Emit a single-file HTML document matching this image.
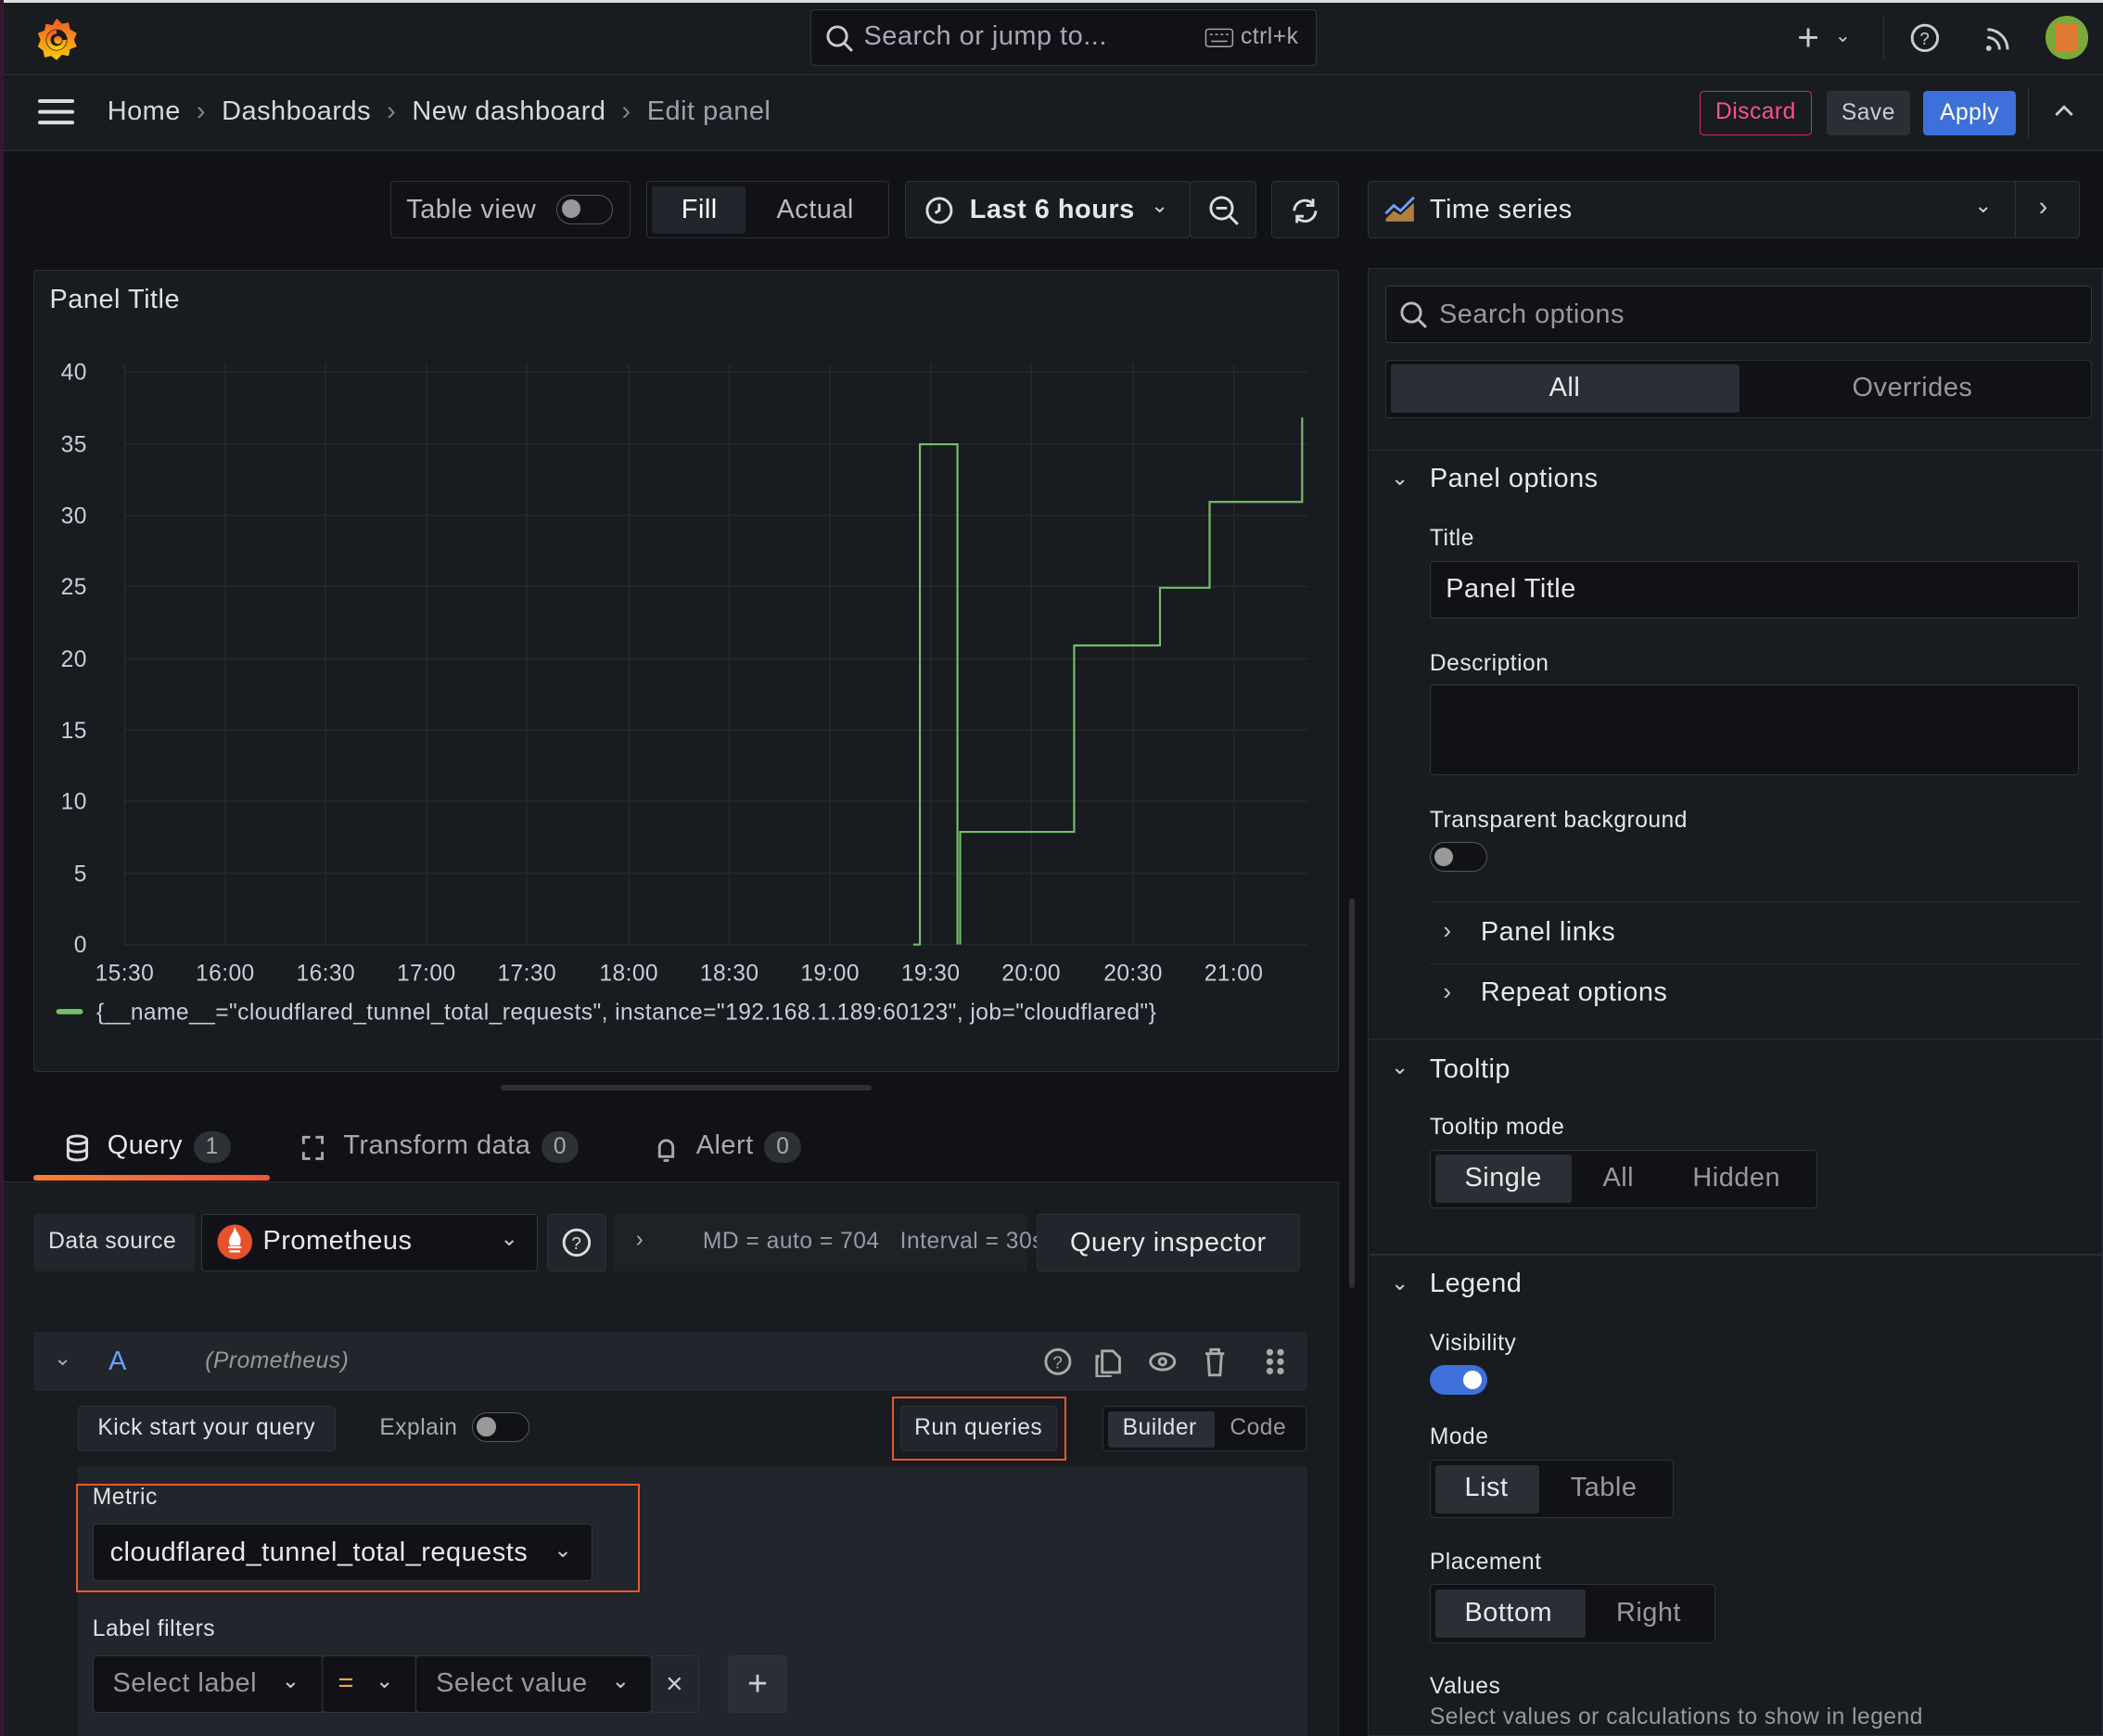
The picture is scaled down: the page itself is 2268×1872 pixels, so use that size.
<!DOCTYPE html>
<html><head><meta charset="utf-8">
<style>
*{box-sizing:border-box;margin:0;padding:0}
html,body{width:2268px;height:1872px;overflow:hidden;background:#111217}
#w{position:absolute;left:0;top:0;width:1568px;height:1294px;zoom:1.44643;background:#111217;font-family:"Liberation Sans",sans-serif;color:#ccccdc;overflow:hidden;letter-spacing:0.35px}
.a{position:absolute}
.box{position:absolute;border:1px solid #2f3137;border-radius:3px;background:#181b1f}
.t{position:absolute;white-space:nowrap}
.btn{position:absolute;background:#22252b;border:1px solid #2f3137;border-radius:3px;color:#ccccdc;display:flex;align-items:center;justify-content:center}
.lbl{position:absolute;font-size:17px;color:#e6e6ea}
.inp{position:absolute;background:#111217;border:1px solid #34363c;border-radius:3px}
.sep{position:absolute;height:1px;background:#2a2d33}
.badge{display:inline-block;background:#2d3036;border-radius:12px;padding:2px 9px;font-size:17px;margin-left:8px;color:#aaa}
</style></head><body><div id="w">
<div class="a" style="left:0;top:0;width:1568px;height:2px;background:#ddd"></div>
<div class="a" style="left:0;top:0;width:3px;height:1294px;background:#3a1530"></div>
<div class="a" style="left:3px;top:2px;width:1565px;height:110px;background:#181b1f"></div>
<div class="sep" style="left:3px;top:55px;width:1565px;background:#2c2e34"></div>
<div class="sep" style="left:3px;top:112px;width:1565px;background:#2c2e34"></div>
<svg class="a" style="left:24px;top:12px" width="36" height="36" viewBox="0 0 36 36"><defs><linearGradient id="g" x1="0" y1="1" x2="0" y2="0"><stop offset="0" stop-color="#fbca0a"/><stop offset="1" stop-color="#f05a28"/></linearGradient></defs><path d="M18 2l4 4 5-1 1 5 5 3-2 5 2 5-5 2-1 5-5-1-4 4-4-3-5 1-1-5-4-3 2-5-2-5 5-2 1-5 5 1z" fill="url(#g)"/><circle cx="18" cy="18" r="8" fill="#181b1f"/><path d="M18 12a6 6 0 1 0 6 6" stroke="url(#g)" stroke-width="3" fill="none"/><circle cx="19" cy="18" r="3" fill="url(#g)"/></svg>
<div class="inp" style="left:604px;top:7px;width:378px;height:42px;background:#111217"></div>
<svg class="a" style="left:615px;top:18px" width="22" height="22" viewBox="0 0 22 22"><circle cx="9" cy="9" r="7" stroke="#ccc" stroke-width="2" fill="none"/><path d="M14 14l6 6" stroke="#ccc" stroke-width="2"/></svg>
<div class="t" style="left:644px;top:16px;font-size:20px;color:#a8a8b4">Search or jump to...</div>
<svg class="a" style="left:898px;top:21px" width="22" height="15"><rect x="1" y="1" width="20" height="13" rx="2" stroke="#aaa" fill="none"/><path d="M4 5h2M8 5h2M12 5h2M16 5h2M5 10h12" stroke="#aaa"/></svg>
<div class="t" style="left:925px;top:18px;font-size:17px;color:#aaa">ctrl+k</div>
<div class="t" style="left:1340px;top:12px;font-size:28px;color:#ccc">+</div>
<div class="t" style="left:1368px;top:18px;font-size:14px;color:#ccc">⌄</div>
<div class="a" style="left:1404px;top:12px;width:1px;height:32px;background:#34363c"></div>
<svg class="a" style="left:1424px;top:17px" width="22" height="22"><circle cx="11" cy="11" r="9.5" stroke="#ccc" stroke-width="2" fill="none"/><text x="11" y="16" font-size="13" fill="#ccc" text-anchor="middle" font-family="Liberation Sans">?</text></svg>
<svg class="a" style="left:1479px;top:18px" width="22" height="22"><path d="M3 4a15 15 0 0 1 15 15M3 10a9 9 0 0 1 9 9" stroke="#ccc" stroke-width="2" fill="none"/><circle cx="4" cy="18" r="2" fill="#ccc"/></svg>
<div class="a" style="left:1525px;top:12px;width:32px;height:32px;border-radius:50%;background:#7aa83a;overflow:hidden"><div class="a" style="left:8px;top:6px;width:16px;height:20px;background:#e07a30"></div></div>
<div class="a" style="left:28px;top:74px;width:27px;height:3px;background:#ddd;border-radius:2px;box-shadow:0 8px 0 #ddd,0 16px 0 #ddd"></div>
<div class="t" style="left:80px;top:72px;font-size:20px;color:#d8d8e0">Home&nbsp;&nbsp;<span style="color:#888">›</span>&nbsp;&nbsp;Dashboards&nbsp;&nbsp;<span style="color:#888">›</span>&nbsp;&nbsp;New dashboard&nbsp;&nbsp;<span style="color:#888">›</span>&nbsp;&nbsp;<span style="color:#a0a0ac">Edit panel</span></div>
<div class="a" style="left:1267px;top:68px;width:84px;height:33px;border:1px solid #e0226e;border-radius:3px;color:#ff5286;font-size:17px;text-align:center;line-height:31px">Discard</div>
<div class="btn" style="left:1362px;top:68px;width:62px;height:33px;font-size:17px;background:#2b2e35">Save</div>
<div class="a" style="left:1434px;top:68px;width:69px;height:33px;background:#3d71d9;border-radius:3px;color:#fff;font-size:17px;text-align:center;line-height:33px">Apply</div>
<div class="a" style="left:1512px;top:65px;width:1px;height:38px;background:#34363c"></div>
<svg class="a" style="left:1530px;top:77px" width="18" height="12"><path d="M3 9l6-6 6 6" stroke="#ccc" stroke-width="2" fill="none"/></svg>
<div class="box" style="left:291px;top:135px;width:179px;height:43px;background:#111217"></div>
<div class="t" style="left:303px;top:145px;font-size:20px;color:#bbb">Table view</div>
<div class="a" style="left:415px;top:145px;width:42px;height:22px;border:1px solid #55575e;border-radius:11px"><div class="a" style="left:3px;top:3px;width:14px;height:14px;border-radius:50%;background:#999"></div></div>
<div class="box" style="left:482px;top:135px;width:181px;height:43px;background:#111217"></div>
<div class="a" style="left:486px;top:139px;width:70px;height:35px;background:#22252b;border-radius:2px"></div>
<div class="t" style="left:508px;top:145px;font-size:20px;color:#fff">Fill</div>
<div class="t" style="left:579px;top:145px;font-size:20px;color:#bbb">Actual</div>
<div class="box" style="left:675px;top:135px;width:213px;height:43px;background:#181b1f"></div>
<svg class="a" style="left:689px;top:146px" width="22" height="22"><circle cx="11" cy="11" r="9" stroke="#ddd" stroke-width="2" fill="none"/><path d="M11 6v5l-3 2" stroke="#ddd" stroke-width="2" fill="none"/></svg>
<div class="t" style="left:723px;top:145px;font-size:20px;color:#e8e8ec;font-weight:bold">Last 6 hours</div>
<div class="t" style="left:858px;top:144px;font-size:16px;color:#ccc">⌄</div>
<div class="box" style="left:887px;top:135px;width:50px;height:43px"></div>
<svg class="a" style="left:901px;top:145px" width="24" height="24"><circle cx="10" cy="10" r="8" stroke="#ddd" stroke-width="2" fill="none"/><path d="M6 10h8M16 16l6 6" stroke="#ddd" stroke-width="2"/></svg>
<div class="box" style="left:948px;top:135px;width:50px;height:43px"></div>
<svg class="a" style="left:961px;top:145px" width="24" height="24"><path d="M4 12a8 8 0 0 1 14-5M20 12a8 8 0 0 1-14 5" stroke="#ddd" stroke-width="2" fill="none"/><path d="M18 3v5h-5M6 21v-5h5" stroke="#ddd" stroke-width="2" fill="none"/></svg>
<div class="box" style="left:25px;top:201px;width:973px;height:598px"></div>
<div class="t" style="left:37px;top:212px;font-size:20px;color:#e0e0e6">Panel Title</div>
<svg class="a" style="left:25px;top:201px" width="973" height="598" font-family="Liberation Sans" font-size="17" fill="#ccccdc" letter-spacing="0.3">
<g stroke="#26282d" stroke-width="1">
<path d="M68 76H950M68 130H950M68 183H950M68 236H950M68 290H950M68 343H950M68 396H950M68 450H950M68 503H950"/>
<path d="M68 70V503M143 70V503M218 70V503M293 70V503M368 70V503M444 70V503M519 70V503M594 70V503M669 70V503M744 70V503M820 70V503M895 70V503"/>
</g>
<g text-anchor="end"><text x="40" y="82">40</text><text x="40" y="136">35</text><text x="40" y="189">30</text><text x="40" y="242">25</text><text x="40" y="296">20</text><text x="40" y="349">15</text><text x="40" y="402">10</text><text x="40" y="456">5</text><text x="40" y="509">0</text></g>
<g text-anchor="middle"><text x="68" y="530">15:30</text><text x="143" y="530">16:00</text><text x="218" y="530">16:30</text><text x="293" y="530">17:00</text><text x="368" y="530">17:30</text><text x="444" y="530">18:00</text><text x="519" y="530">18:30</text><text x="594" y="530">19:00</text><text x="669" y="530">19:30</text><text x="744" y="530">20:00</text><text x="820" y="530">20:30</text><text x="895" y="530">21:00</text></g>
<path d="M656 503H661V130H689V503M691 503V419H776V280H840V237H877V173H946V110" stroke="#73bf69" stroke-width="1.5" fill="none"/>
<rect x="17" y="551" width="20" height="4" rx="2" fill="#73bf69"/>
<text x="47" y="559">{__name__="cloudflared_tunnel_total_requests", instance="192.168.1.189:60123", job="cloudflared"}</text>
</svg>
<div class="a" style="left:373px;top:809px;width:277px;height:4px;border-radius:2px;background:#2e3036"></div>
<div class="a" style="left:1006px;top:670px;width:4px;height:290px;border-radius:2px;background:#2e3036"></div>
<svg class="a" style="left:48px;top:845px" width="20" height="22"><ellipse cx="10" cy="5" rx="7" ry="3" stroke="#ddd" stroke-width="2" fill="none"/><path d="M3 5v12c0 4 14 4 14 0V5M3 11c0 4 14 4 14 0" stroke="#ddd" stroke-width="2" fill="none"/></svg>
<div class="t" style="left:80px;top:843px;font-size:20px;color:#e8e8ec">Query<span class="badge">1</span></div>
<div class="a" style="left:25px;top:876px;width:176px;height:4px;border-radius:2px;background:linear-gradient(90deg,#f77f32,#f0563a)"></div>
<svg class="a" style="left:223px;top:845px" width="20" height="22"><path d="M3 8V3h5M17 14v5h-5M12 3h5v5M8 19H3v-5" stroke="#aaa" stroke-width="2" fill="none"/></svg>
<div class="t" style="left:256px;top:843px;font-size:20px;color:#aaa">Transform data<span class="badge">0</span></div>
<svg class="a" style="left:487px;top:846px" width="20" height="22"><path d="M5 16V9a5 5 0 0 1 10 0v7H4zM8 19h4" stroke="#aaa" stroke-width="2" fill="none"/></svg>
<div class="t" style="left:519px;top:843px;font-size:20px;color:#aaa">Alert<span class="badge">0</span></div>
<div class="a" style="left:3px;top:881px;width:995px;height:413px;background:#181b1f;border-top:1px solid #2a2d33;border-right:1px solid #2a2d33"></div>
<div class="a" style="left:25px;top:905px;width:120px;height:43px;background:#22252b;border-radius:2px"></div>
<div class="t" style="left:36px;top:916px;font-size:17px;color:#e0e0e6">Data source</div>
<div class="inp" style="left:150px;top:905px;width:251px;height:43px"></div>
<svg class="a" style="left:161px;top:912px" width="28" height="28"><circle cx="14" cy="14" r="13" fill="#e6522c"/><path d="M9 18h10M10 21h8M14 5c2 4 5 6 3 11H11c-2-5 2-7 3-11z" stroke="#fff" stroke-width="1.5" fill="#fff"/></svg>
<div class="t" style="left:196px;top:914px;font-size:20px;color:#e8e8ec">Prometheus</div>
<div class="t" style="left:373px;top:914px;font-size:16px;color:#ccc">⌄</div>
<div class="btn" style="left:408px;top:905px;width:44px;height:43px"><svg width="22" height="22"><circle cx="11" cy="11" r="9.5" stroke="#ddd" stroke-width="2" fill="none"/><text x="11" y="16" font-size="13" fill="#ddd" text-anchor="middle" font-family="Liberation Sans">?</text></svg></div>
<div class="a" style="left:458px;top:905px;width:308px;height:43px;background:#1e2126;border-radius:2px"></div>
<div class="t" style="left:474px;top:915px;font-size:17px;color:#aaa">›</div>
<div class="t" style="left:524px;top:916px;font-size:17px;color:#9a9aa6">MD = auto = 704&nbsp;&nbsp;&nbsp;Interval = 30s</div>
<div class="btn" style="left:773px;top:905px;width:196px;height:43px;font-size:20px;color:#e8e8ec">Query inspector</div>
<div class="a" style="left:25px;top:993px;width:950px;height:44px;background:#22252b;border-radius:2px"></div>
<div class="t" style="left:40px;top:1003px;font-size:16px;color:#aaa">⌄</div>
<div class="t" style="left:81px;top:1004px;font-size:20px;color:#6e9fff">A</div>
<div class="t" style="left:153px;top:1005px;font-size:17px;color:#999;font-style:italic">(Prometheus)</div>
<svg class="a" style="left:778px;top:1003px" width="190" height="24" stroke="#aaa" stroke-width="2" fill="none"><circle cx="11" cy="12" r="9"/><text x="11" y="17" font-size="13" fill="#aaa" stroke="none" text-anchor="middle" font-family="Liberation Sans">?</text><path d="M44 4h8l5 5v11H44zM42 8h-2v15h11"/><ellipse cx="89" cy="12" rx="9" ry="6"/><circle cx="89" cy="12" r="2.5"/><path d="M121 6h14M125 6V3h6v3M123 6l1 16h8l1-16"/><circle cx="169" cy="5" r="1.5" fill="#aaa"/><circle cx="177" cy="5" r="1.5" fill="#aaa"/><circle cx="169" cy="12" r="1.5" fill="#aaa"/><circle cx="177" cy="12" r="1.5" fill="#aaa"/><circle cx="169" cy="19" r="1.5" fill="#aaa"/><circle cx="177" cy="19" r="1.5" fill="#aaa"/></svg>
<div class="btn" style="left:58px;top:1048px;width:192px;height:34px;font-size:17px;color:#e0e0e6">Kick start your query</div>
<div class="t" style="left:283px;top:1055px;font-size:17px;color:#aaa">Explain</div>
<div class="a" style="left:352px;top:1053px;width:43px;height:22px;border:1px solid #55575e;border-radius:11px;background:#111217"><div class="a" style="left:3px;top:3px;width:14px;height:14px;border-radius:50%;background:#999"></div></div>
<div class="a" style="left:665px;top:1041px;width:130px;height:48px;border:2px solid #e8582a"></div>
<div class="btn" style="left:671px;top:1048px;width:117px;height:34px;font-size:17px;color:#e0e0e6">Run queries</div>
<div class="a" style="left:822px;top:1048px;width:152px;height:34px;border:1px solid #2f3137;border-radius:3px;background:#111217"></div>
<div class="a" style="left:826px;top:1052px;width:80px;height:27px;background:#2b2e35;border-radius:2px"></div>
<div class="t" style="left:837px;top:1055px;font-size:17px;color:#e0e0e6">Builder</div>
<div class="t" style="left:917px;top:1055px;font-size:17px;color:#999">Code</div>
<div class="a" style="left:58px;top:1093px;width:917px;height:201px;background:#22252b"></div>
<div class="a" style="left:57px;top:1106px;width:420px;height:81px;border:2px solid #e8582a"></div>
<div class="t" style="left:69px;top:1107px;font-size:17px;color:#e0e0e6">Metric</div>
<div class="inp" style="left:69px;top:1136px;width:373px;height:43px"></div>
<div class="t" style="left:82px;top:1146px;font-size:20px;color:#e8e8ec">cloudflared_tunnel_total_requests</div>
<div class="t" style="left:413px;top:1146px;font-size:16px;color:#ccc">⌄</div>
<div class="t" style="left:69px;top:1205px;font-size:17px;color:#e0e0e6">Label filters</div>
<div class="inp" style="left:69px;top:1234px;width:172px;height:43px"></div>
<div class="t" style="left:84px;top:1244px;font-size:20px;color:#999">Select label</div>
<div class="t" style="left:210px;top:1244px;font-size:16px;color:#ccc">⌄</div>
<div class="inp" style="left:240px;top:1234px;width:71px;height:43px"></div>
<div class="t" style="left:252px;top:1244px;font-size:20px;color:#f2a94b">=</div>
<div class="t" style="left:280px;top:1244px;font-size:16px;color:#ccc">⌄</div>
<div class="inp" style="left:310px;top:1234px;width:176px;height:43px"></div>
<div class="t" style="left:325px;top:1244px;font-size:20px;color:#999">Select value</div>
<div class="t" style="left:456px;top:1244px;font-size:16px;color:#ccc">⌄</div>
<div class="btn" style="left:485px;top:1234px;width:36px;height:43px;font-size:22px">×</div>
<div class="btn" style="left:543px;top:1234px;width:44px;height:43px;font-size:26px;background:#2b2e35">+</div>
<div class="box" style="left:1020px;top:135px;width:531px;height:43px"></div>
<svg class="a" style="left:1032px;top:145px" width="24" height="20"><path d="M1 14l6-6 5 4 10-10" stroke="#6e9fff" stroke-width="2" fill="none"/><path d="M1 18l6-6 5 3 10-9v14H1z" fill="#f2a94b" opacity=".7"/></svg>
<div class="t" style="left:1066px;top:145px;font-size:20px;color:#e8e8ec">Time series</div>
<div class="t" style="left:1472px;top:144px;font-size:16px;color:#ccc">⌄</div>
<div class="a" style="left:1502px;top:135px;width:1px;height:43px;background:#2f3137"></div>
<div class="t" style="left:1520px;top:143px;font-size:20px;color:#ccc">›</div>
<div class="a" style="left:1020px;top:200px;width:548px;height:1094px;background:#181b1f;border:1px solid #2a2d33"></div>
<div class="inp" style="left:1033px;top:213px;width:527px;height:43px"></div>
<svg class="a" style="left:1043px;top:224px" width="22" height="22"><circle cx="9" cy="9" r="7" stroke="#bbb" stroke-width="2" fill="none"/><path d="M14 14l6 6" stroke="#bbb" stroke-width="2"/></svg>
<div class="t" style="left:1073px;top:223px;font-size:20px;color:#999">Search options</div>
<div class="a" style="left:1033px;top:268px;width:527px;height:44px;border:1px solid #2f3137;border-radius:3px;background:#111217"></div>
<div class="a" style="left:1037px;top:272px;width:260px;height:36px;background:#2b2e35;border-radius:2px"></div>
<div class="t" style="left:1155px;top:278px;font-size:20px;color:#e8e8ec">All</div>
<div class="t" style="left:1381px;top:278px;font-size:20px;color:#999">Overrides</div>
<div class="sep" style="left:1021px;top:335px;width:547px"></div>
<div class="t" style="left:1037px;top:347px;font-size:16px;color:#ccc">⌄</div>
<div class="t" style="left:1066px;top:346px;font-size:20px;color:#e8e8ec">Panel options</div>
<div class="lbl" style="left:1066px;top:392px">Title</div>
<div class="inp" style="left:1066px;top:418px;width:484px;height:43px"></div>
<div class="t" style="left:1078px;top:428px;font-size:20px;color:#e8e8ec">Panel Title</div>
<div class="lbl" style="left:1066px;top:485px">Description</div>
<div class="inp" style="left:1066px;top:510px;width:484px;height:68px"></div>
<div class="lbl" style="left:1066px;top:602px">Transparent background</div>
<div class="a" style="left:1066px;top:628px;width:43px;height:22px;border:1px solid #55575e;border-radius:11px;background:#111217"><div class="a" style="left:3px;top:3px;width:14px;height:14px;border-radius:50%;background:#999"></div></div>
<div class="sep" style="left:1066px;top:672px;width:484px"></div>
<div class="t" style="left:1076px;top:683px;font-size:18px;color:#ccc">›</div>
<div class="t" style="left:1104px;top:684px;font-size:20px;color:#e8e8ec">Panel links</div>
<div class="sep" style="left:1066px;top:718px;width:484px"></div>
<div class="t" style="left:1076px;top:729px;font-size:18px;color:#ccc">›</div>
<div class="t" style="left:1104px;top:729px;font-size:20px;color:#e8e8ec">Repeat options</div>
<div class="sep" style="left:1021px;top:774px;width:547px"></div>
<div class="t" style="left:1037px;top:786px;font-size:16px;color:#ccc">⌄</div>
<div class="t" style="left:1066px;top:786px;font-size:20px;color:#e8e8ec">Tooltip</div>
<div class="lbl" style="left:1066px;top:831px">Tooltip mode</div>
<div class="a" style="left:1066px;top:857px;width:289px;height:44px;border:1px solid #2f3137;border-radius:3px;background:#111217"></div>
<div class="a" style="left:1070px;top:861px;width:102px;height:36px;background:#2b2e35;border-radius:2px"></div>
<div class="t" style="left:1092px;top:867px;font-size:20px;color:#e8e8ec">Single</div>
<div class="t" style="left:1195px;top:867px;font-size:20px;color:#999">All</div>
<div class="t" style="left:1262px;top:867px;font-size:20px;color:#999">Hidden</div>
<div class="sep" style="left:1021px;top:935px;width:547px"></div>
<div class="t" style="left:1037px;top:947px;font-size:16px;color:#ccc">⌄</div>
<div class="t" style="left:1066px;top:946px;font-size:20px;color:#e8e8ec">Legend</div>
<div class="lbl" style="left:1066px;top:992px">Visibility</div>
<div class="a" style="left:1066px;top:1018px;width:43px;height:22px;border-radius:11px;background:#3d71d9"><div class="a" style="left:25px;top:4px;width:14px;height:14px;border-radius:50%;background:#fff"></div></div>
<div class="lbl" style="left:1066px;top:1062px">Mode</div>
<div class="a" style="left:1066px;top:1088px;width:182px;height:44px;border:1px solid #2f3137;border-radius:3px;background:#111217"></div>
<div class="a" style="left:1070px;top:1092px;width:78px;height:36px;background:#2b2e35;border-radius:2px"></div>
<div class="t" style="left:1092px;top:1098px;font-size:20px;color:#e8e8ec">List</div>
<div class="t" style="left:1171px;top:1098px;font-size:20px;color:#999">Table</div>
<div class="lbl" style="left:1066px;top:1155px">Placement</div>
<div class="a" style="left:1066px;top:1181px;width:213px;height:44px;border:1px solid #2f3137;border-radius:3px;background:#111217"></div>
<div class="a" style="left:1070px;top:1185px;width:112px;height:36px;background:#2b2e35;border-radius:2px"></div>
<div class="t" style="left:1092px;top:1191px;font-size:20px;color:#e8e8ec">Bottom</div>
<div class="t" style="left:1205px;top:1191px;font-size:20px;color:#999">Right</div>
<div class="lbl" style="left:1066px;top:1248px">Values</div>
<div class="t" style="left:1066px;top:1271px;font-size:17px;color:#999">Select values or calculations to show in legend</div>
</div></body></html>
